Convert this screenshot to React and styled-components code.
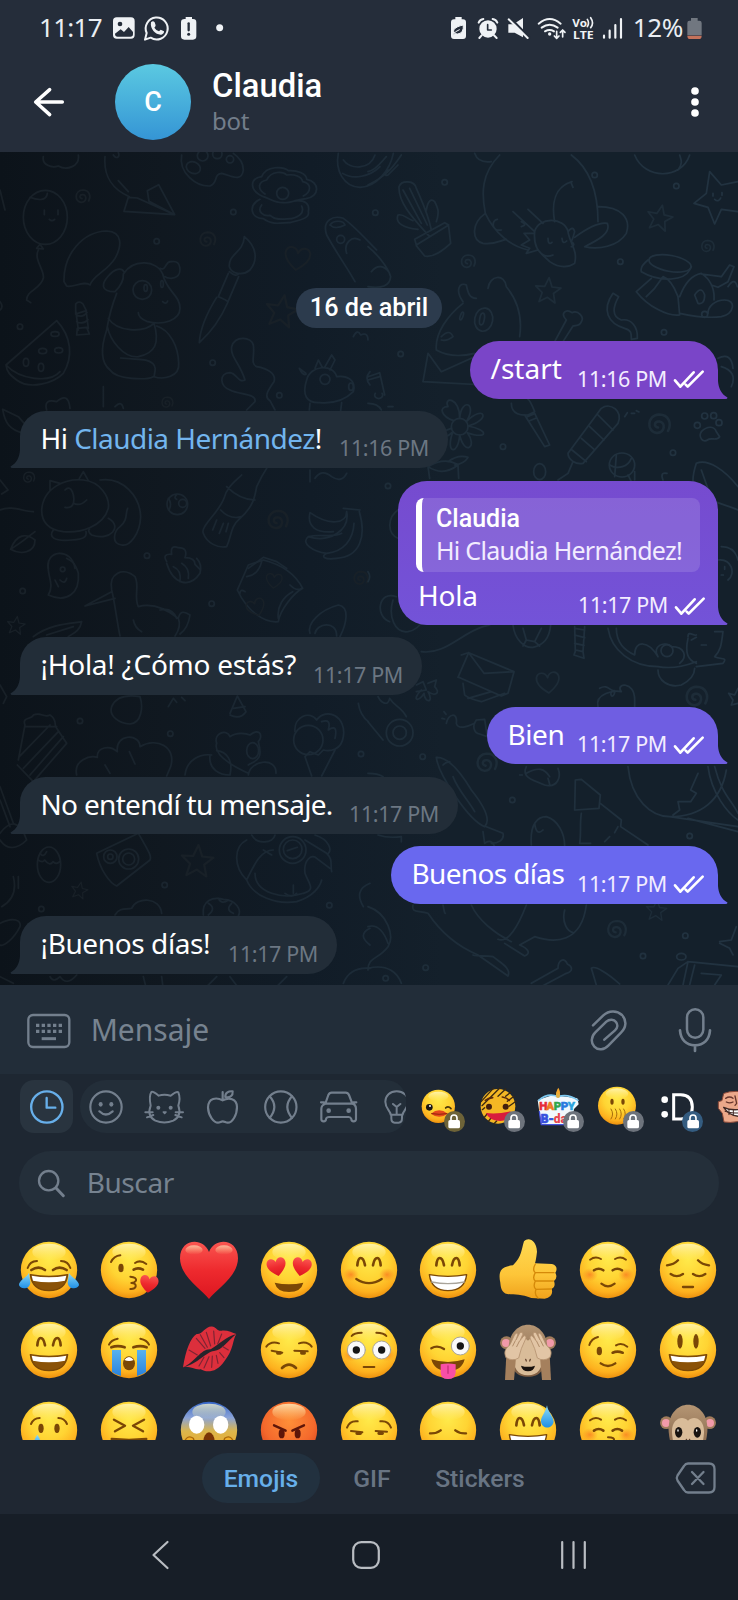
import React from "react";
import styled, { createGlobalStyle } from "styled-components";

const GlobalStyle = createGlobalStyle`
  * { box-sizing: border-box; }
  body { margin: 0; background: #1e2731; }
`;

const sans = `"Noto Sans", "Open Sans", sans-serif`;
const roboto = `Roboto, "Liberation Sans", sans-serif`;

/* ---------- shared pieces ---------- */

const Svg = styled.svg`
  display: block;
  flex: none;
  overflow: visible;
  margin-left: ${(p) => p.$ml || 0}px;
  margin-top: ${(p) => p.$mt || 0}px;
  fill: none;
  stroke-linecap: round;
  stroke-linejoin: round;
`;

/* Icons are drawn on a grid of three units per pixel. */
function Glyph({ box, ml, mt, children }) {
  const [, , w, h] = box;
  return (
    <Svg viewBox={box.join(" ")} width={w / 3} height={h / 3} $ml={ml} $mt={mt}>
      {children}
    </Svg>
  );
}

const Screen = styled.div`
  width: 738px;
  height: 1600px;
  overflow: hidden;
  display: flex;
  flex-direction: column;
  background: #1e2732;
  font-family: ${sans};
  color: #fff;
`;

/* ---------- top ---------- */

const Header = styled.header`
  height: 152px;
  flex: none;
  background: #252d3a;
`;

const StatusBar = styled.div`
  height: 56px;
  display: flex;
  align-items: center;
  padding: 0 36px 0 39px;
`;

const StatusText = styled.span`
  width: ${(p) => p.$w}px;
  margin-left: ${(p) => p.$ml || 0}px;
  font-size: 26px;
  line-height: 55px;
  height: 56px;
  letter-spacing: ${(p) => p.$ls || 0}px;
  color: #e9edf2;
  white-space: nowrap;
`;

const Spacer = styled.div`
  flex: 1;
`;

const TitleBar = styled.div`
  height: 96px;
  display: flex;
  align-items: center;
  padding: 0 39px 4px 34px;
`;

const Avatar = styled.div`
  width: 76px;
  height: 76px;
  margin-left: 51px;
  border-radius: 50%;
  background: linear-gradient(#5bc9e1, #3595d5);
  font: 500 27px/76px ${roboto};
  text-align: center;
`;

const Who = styled.div`
  margin-left: 21px;
  flex: 1;
`;

const Name = styled.div`
  font: 500 32.8px/38px ${roboto};
  margin-top: -1px;
`;

const Kind = styled.div`
  font-size: 24px;
  line-height: 32px;
  letter-spacing: -0.3px;
  color: #737e8b;
`;

/* ---------- chat ---------- */

const Chat = styled.main`
  position: relative;
  height: 833px;
  flex: none;
  overflow: hidden;
  background: linear-gradient(90deg, #0c131a 0, #101820 22%, #111c27 42%, #14202b 60%, #14202b 100%);
`;

const Wallpaper = styled.svg`
  position: absolute;
  inset: 0;
  fill: none;
  stroke: url(#ink);
  stroke-width: 5;
  stroke-linecap: round;
  stroke-linejoin: round;
`;

const Thread = styled.div`
  position: relative;
  display: flex;
  flex-direction: column;
  gap: 12.2px;
  padding: 136px 20px 0;
`;

const DatePill = styled.div`
  align-self: center;
  width: 146px;
  height: 40px;
  margin-bottom: 1px;
  border-radius: 20px;
  background: #2c3b4d;
  font: 500 25.2px/40px ${roboto};
  text-align: center;
`;

const Bubble = styled.div`
  position: relative;
  align-self: ${(p) => (p.$out ? "flex-end" : "flex-start")};
  width: ${(p) => p.$w}px;
  min-height: 57.5px;
  background: ${(p) => p.$bg || "#222d38"};
  border-radius: ${(p) => (p.$out ? "29px 29px 0 29px" : "26px 29px 29px 0")};
  padding: ${(p) => (p.$reply ? "17px 18px 0" : "0 20px 0 20.5px")};
`;

const Line = styled.div`
  display: flex;
  justify-content: space-between;
  height: 57.5px;
  ${(p) => p.$reply && "margin: -4px 1px 0 2px;"}
`;

const Words = styled.span`
  font-size: 28px;
  line-height: 55px;
  white-space: pre;
  letter-spacing: ${(p) => p.$ls || 0}px;
`;

const Mention = styled.span`
  color: #72b5ee;
`;

const Stamp = styled.span`
  display: flex;
  gap: 8px;
  margin-top: 9.5px;
  height: 40px;
  font-size: 21.5px;
  line-height: 55px;
  white-space: pre;
  color: ${(p) => (p.$out ? "#f3edff" : "#6c7783")};
  margin-right: ${(p) => (p.$out ? -6 : 0)}px;
`;

const StampText = styled.span`
  width: 89px;
  letter-spacing: -0.4px;
`;

const Tail = styled.svg`
  position: absolute;
  bottom: 0;
  ${(p) => (p.$out ? "right: -10px;" : "left: -10px; transform: scaleX(-1);")}
`;

const Quote = styled.div`
  height: 74px;
  border-left: 6px solid #fff;
  border-radius: 8px;
  background: rgba(255, 255, 255, 0.13);
  padding: 5px 0 0 14px;
  white-space: nowrap;
`;

const QuoteName = styled.div`
  font: 500 25px/31px ${roboto};
`;

const QuoteText = styled.div`
  font-size: 25px;
  line-height: 32px;
  letter-spacing: -0.72px;
  color: #f2ecff;
`;

function Checks() {
  return (
    <Glyph box={[922, 660, 90, 54]} mt={19.5}>
      <path d="M925 691 L941 710 L981 667 M957 704 L963 710 L1008 665" stroke="#fff" strokeWidth="8" />
    </Glyph>
  );
}

function Message({ w, out, bg, tail = "#222d38", quote, time, ls, children }) {
  return (
    <Bubble $w={w} $out={out} $bg={bg} $reply={!!quote}>
      {quote}
      <Line $reply={!!quote}>
        <Words $ls={ls}>{children}</Words>
        <Stamp $out={out}>
          <StampText>{time}</StampText>
          {out && <Checks />}
        </Stamp>
      </Line>
      <Tail $out={out} width="11" height="18" viewBox="0 0 11 18">
        <path d="M0 0 H1 C1.500 7 4 13 10.500 16.500 Q10.500 18 8.500 18 H0 Z" fill={tail} />
      </Tail>
    </Bubble>
  );
}

/* ---------- wallpaper drawings ---------- */

const Swirl = ({ x, y, s = 1 }) => (
  <path transform={`translate(${x} ${y}) scale(${s})`} d="M0 3 C-9 2 -8 -10 3 -9 C16 -7 14 13 -2 14 C-24 12 -22 -22 2 -23 C22 -23 28 -5 20 10" />
);
const Star = ({ x, y, s = 1, r = 0 }) => (
  <path transform={`translate(${x} ${y}) rotate(${r}) scale(${s})`} d="M0 -40 L11 -13 L38 -12 L17 6 L24 34 L0 19 L-24 34 L-17 6 L-38 -12 L-11 -13 Z" />
);
const Heart = ({ x, y, s = 1, r = 0 }) => (
  <path transform={`translate(${x} ${y}) rotate(${r}) scale(${s})`} d="M0 32 C-20 18 -38 0 -33 -18 C-27 -34 -6 -32 0 -14 C6 -32 27 -34 33 -18 C38 0 20 18 0 32 Z" />
);
const Dots = ({ at }) => at.map(([x, y]) => <circle key={`${x}-${y}`} cx={x} cy={y} r="8" />);

function Doodles() {
  return (
    <Wallpaper width="738" height="833" viewBox="0 0 738 833">
      <defs>
        <linearGradient id="ink" gradientUnits="userSpaceOnUse" x1="0" y1="0" x2="1110" y2="0">
          <stop offset="0" stopColor="#182027" />
          <stop offset="1" stopColor="#1c2b38" />
        </linearGradient>
        <linearGradient id="inkRight" gradientUnits="userSpaceOnUse" x1="0" y1="0" x2="1110" y2="0">
          <stop offset="0" stopColor="#1d2c38" />
          <stop offset="1" stopColor="#223341" />
        </linearGradient>
      </defs>
      <g transform="translate(0 -2) scale(.33333)">
        <path d="M130 20 C125 45 155 55 175 48 C200 62 240 50 235 15 M315 20 C310 80 340 120 388 140 M340 15 C350 30 360 20 355 8" />
        <path d="M385 142 L372 184 L524 194 L476 104 L442 122 L447 154 L524 194 L412 144 L385 142 M355 92 L385 125" />
        <ellipse cx="136" cy="202" rx="66" ry="81" />
        <path d="M90 142 C110 150 140 155 142 130 M133 180 v14 M174 180 v14 M148 208 q8 8 16 0 M120 283 l-10 12 l20 2 Z M115 300 C100 330 135 360 130 385 C120 420 80 420 80 450 L92 458" />
        <Swirl x={246} y={143} /><Swirl x={620} y={272} s={1.1} /><Swirl x={500} y={760} s={.8} />
        <path d="M545 15 C535 70 590 110 630 108 C655 100 640 72 665 70 C690 75 725 100 730 60 C730 35 715 20 700 10" />
        <ellipse cx="580" cy="53" rx="22" ry="17" transform="rotate(25 580 53)" /><circle cx="608" cy="17" r="16" /><circle cx="652" cy="12" r="14" /><circle cx="690" cy="28" r="11" />
        <path d="M790 140 C745 120 750 85 785 80 C800 45 850 50 865 62 C890 60 920 70 920 88 C960 95 960 140 918 146 C880 150 875 160 850 158 C820 158 810 145 790 140 Z M795 132 C770 115 775 95 800 90 C815 60 850 65 860 75 C885 72 905 80 908 95 C935 100 935 125 910 138" />
        <path d="M780 148 C745 165 750 205 790 206 C820 230 855 215 870 218 C900 210 930 205 925 185 C930 160 915 150 885 152 M785 165 C770 185 790 200 810 196 C830 215 860 205 875 206 C895 200 915 190 905 168" />
        <circle cx="848" cy="130" r="18" />
        <path d="M1015 10 C1005 60 1030 110 1080 112 C1130 110 1170 60 1180 10 M1030 30 C1050 60 1110 60 1125 15 M1028 70 C1060 90 1110 80 1140 50" />
        <path d="M192 395 C190 310 250 245 320 243 C370 245 365 290 345 325 C320 365 280 375 270 405 C255 390 215 415 200 408 Z" />
        <path d="M345 425 C300 425 305 400 325 378 C345 355 365 352 372 366 M370 372 C400 325 470 330 488 372 C500 425 540 435 540 475 C540 510 490 528 440 514 C420 505 415 495 415 488 M480 355 C500 365 495 330 515 335 C545 330 545 370 530 380 C520 388 500 385 495 380 M370 372 C372 395 355 415 345 425 M488 455 q10 10 15 -2" />
        <circle cx="427" cy="420" r="28" /><ellipse cx="437" cy="414" rx="5" ry="10" /><ellipse cx="486" cy="402" rx="4" ry="10" />
        <path d="M350 430 C330 480 325 510 320 540 C300 600 305 640 330 660 C350 690 440 690 460 680 M325 505 C350 545 430 550 462 520 C480 580 465 610 415 620 C370 625 330 570 322 530 M362 624 C420 630 440 625 458 640 C470 650 465 665 462 680 C490 690 540 680 536 640 C535 590 510 540 470 528" />
        <path d="M733 260 C770 290 775 330 750 360 C725 380 695 370 688 350 C685 310 730 310 733 260 M688 365 C700 375 710 380 718 370 M685 370 L655 440 C665 445 675 448 684 455 L716 380 M650 442 C620 490 600 540 598 578 C640 540 665 500 684 456" />
        <Heart x={892} y={325} s={1.1} r={8} /><Star x={845} y={485} s={1.25} r={10} />
        <path d="M980 255 C965 210 1000 195 1030 205 C1060 225 1100 270 1130 300 M980 255 C1010 310 1040 350 1065 395 M990 225 C1000 210 1030 210 1035 225 C1015 235 1000 235 990 225 M1040 310 C1030 280 1055 255 1080 270" /><circle cx="1022" cy="268" r="12" />
        <path d="M18 645 L170 512 C215 560 220 620 190 670 C160 700 90 720 50 690 C30 675 20 665 18 645 C60 690 150 700 180 665" />
        <ellipse cx="78" cy="637" rx="8" ry="12" /><ellipse cx="123" cy="652" rx="8" ry="12" /><ellipse cx="128" cy="603" rx="12" ry="8" /><ellipse cx="176" cy="601" rx="12" ry="8" /><ellipse cx="165" cy="552" rx="12" ry="7" />
        <path d="M227 462 q10 -12 22 0 l10 20 l-32 10 Z M229 495 q20 10 32 -8 M230 515 q20 10 34 -6 M232 535 l-2 20 l38 -3 l-8 -20 Z M227 480 L235 540 M258 480 L265 535" />
        <path d="M735 690 C720 640 690 620 695 590 C705 555 755 560 760 585 C765 620 750 640 770 650 C800 655 830 670 822 695 C805 720 790 740 810 752 L825 780 M735 690 C715 700 710 670 690 668 C655 670 660 710 690 720 C720 735 770 730 765 755 L740 780" />
        <path d="M920 690 C905 735 920 760 960 758 C1010 762 1040 745 1060 725 C1070 690 1040 675 1010 680 C1000 640 930 645 920 690 M918 670 L898 655 q10 22 20 18 M945 655 l10 -25 l12 22 M975 650 l20 -35 l10 15 l-15 30 M930 760 L928 780 M1025 758 L1022 782" /><circle cx="975" cy="688" r="15" /><ellipse cx="1053" cy="710" rx="7" ry="11" />
        <path d="M1060 560 q12 -25 22 -5 q22 -10 22 15 M1110 665 q-18 20 0 40" />
        <path d="M8 778 L55 800 L90 840 L70 850 C30 840 15 820 8 778 M140 780 q-10 -35 30 -25 q35 -30 40 20 M310 710 v60 M345 770 q20 -20 25 5 M0 120 l15 60 M0 455 q12 15 0 25" />
        <path d="M125 1080 C130 1010 200 985 250 990 C300 995 330 1040 325 1075 C310 1130 240 1150 190 1145 C150 1140 125 1120 125 1080 M150 1022 L150 992 L180 1000 M238 985 L250 965 L265 992 M300 990 C370 980 420 1040 422 1100 C420 1150 390 1190 365 1185 C330 1180 345 1140 360 1130 C385 1110 375 1090 383 1075 M325 1105 C370 1130 330 1175 275 1155 C265 1148 265 1140 268 1138 M160 1140 C145 1160 160 1175 215 1170 C260 1168 260 1155 258 1145 M195 1020 C215 1000 225 1040 220 1060 q20 10 40 -10 M220 1060 q-5 16 -25 12" />
        <Swirl x={85} y={985} s={.8} /><Swirl x={830} y={1115} s={1.4} />
        <path d="M0 990 L24 1020 L5 1032 M0 1080 C35 1065 70 1085 100 1085 M32 1198 C50 1150 80 1150 105 1170 C105 1210 60 1215 32 1198 C60 1180 80 1165 105 1145" />
        <circle cx="532" cy="1063" r="31" /><circle cx="548" cy="1060" r="12" /><path d="M505 1045 q12 15 2 35 M530 1034 q-10 10 0 14" />
        <path d="M725 975 C710 990 680 1010 672 1045 C655 1090 600 1130 610 1150 C620 1180 655 1195 680 1190 C695 1160 690 1130 720 1105 C760 1070 765 1040 770 1010 L785 980 L800 955 M680 1010 Q720 1050 765 1050 M662 1080 Q690 1110 725 1100 M650 1110 L638 1140 M670 1120 L658 1150 M685 1120 L678 1145" />
        <path d="M930 960 L930 995 M945 985 q20 -30 50 -5 q30 20 45 -10 M1030 1075 L1080 1080 M1040 1085 C1040 1120 990 1130 930 1088 C920 1130 950 1150 1000 1145 M1040 1085 C1050 1140 990 1180 925 1160 C900 1180 940 1205 980 1210 C960 1220 975 1230 1010 1225 C1080 1220 1100 1160 1078 1085 M925 1160 C960 1150 1000 1165 1025 1150 M980 1210 C1030 1205 1060 1170 1062 1120" />
        <path d="M145 1255 C135 1200 215 1190 225 1255 M500 1235 q-15 -25 15 -22 q-5 -30 20 -20 q30 0 20 30 q30 0 30 20 L600 1258 M745 1255 L790 1222 L830 1235 L860 1255" />
        <Dots at={[[700, 186], [470, 274], [60, 530], [638, 638], [838, 736], [441, 1217]]} />
      </g>
      <g transform="translate(368 -2) scale(.33333)" stroke="url(#inkRight)">
        <path d="M0 105 C50 80 70 60 100 15 M0 65 C25 60 40 35 55 20 M60 60 q-15 20 0 15 L90 45" />
        <path d="M185 260 C140 210 90 160 93 110 C100 90 140 90 145 115 C160 150 180 190 190 240 M105 120 L160 220 M125 115 L178 225 M140 268 L230 218 L242 225 L145 285 Z M145 287 L170 318 Q200 325 248 280 L242 230 M150 238 C110 235 80 220 90 195 C105 190 115 205 135 212 M175 180 C180 150 190 145 200 155 C210 175 215 185 205 215" />
        <path d="M395 15 C340 70 340 130 352 190 C380 250 430 290 480 300 M610 15 C670 60 690 130 690 215 M352 190 C310 220 310 270 345 280 C380 285 400 270 415 268 M400 240 C370 245 370 210 388 208 M690 170 C760 170 790 205 775 250 C750 290 690 300 650 290 C690 270 730 250 718 220 C690 215 650 240 620 262 M612 95 C560 110 550 160 560 215 M610 100 L615 112 M320 10 q10 30 50 25" />
        <path d="M500 245 C510 200 590 200 600 245 C605 280 630 300 620 340 C590 360 560 345 545 335 C520 310 495 300 500 245 M435 185 L500 245 M480 178 L525 220 M460 215 q20 10 0 15 M500 250 L468 250 L485 270 L460 285 L485 295 L475 310 L510 300 M600 245 q15 -20 20 0 q-5 20 -10 30 q15 10 0 15 M540 265 q0 22 12 12 M582 265 q2 20 14 8 M515 305 q15 20 40 10" />
        <path d="M800 15 C830 90 940 90 965 15 M930 60 C945 40 940 30 935 15" />
        <Star x={875} y={205} r={12} /><Star x={540} y={423} r={5} />
        <path d="M1025 65 L1060 105 L1110 95 M1025 65 L1015 130 L978 160 L1020 172 L1040 222 L1060 178 L1110 185 M1035 130 v8 M1062 128 v8 M1040 148 q12 10 18 -4" />
        <Swirl x={298} y={338} /><Swirl x={1017} y={292} s={.9} />
        <ellipse cx="906" cy="340" rx="64" ry="24" transform="rotate(10 906 340)" />
        <path d="M820 365 Q815 350 840 330 M820 365 C880 400 950 390 965 360 L970 350 M850 385 L805 425 C840 470 900 500 935 495 L930 440 C915 400 900 385 885 380 L860 415 L835 440 M935 440 C950 400 970 375 1000 370 C1030 390 1040 420 1038 450 M935 490 C980 500 1020 505 1060 500 C1100 490 1105 450 1070 450 C1040 450 1020 470 1020 490 M1000 372 L1060 380 L1085 345 L1098 350 L1080 395 L1050 412 L1030 405 M1080 410 q20 -30 28 0 M980 435 q20 -30 30 0 q0 30 -20 25 Z" /><circle cx="1010" cy="493" r="9" />
        <path d="M0 290 C25 310 60 350 68 380 C65 410 40 415 0 410 M10 365 C30 340 50 350 62 365" />
        <path d="M285 455 C260 420 275 395 295 405 C300 430 305 445 325 445 M360 415 C365 375 410 370 415 410 C440 440 465 490 455 560 M285 460 C240 495 200 550 205 600 C240 620 280 620 320 610 M220 560 q25 -25 35 0 q-20 15 -35 10" /><ellipse cx="347" cy="509" rx="27" ry="35" transform="rotate(10 347 509)" /><ellipse cx="342" cy="507" rx="7" ry="18" transform="rotate(10 342 507)" /><ellipse cx="281" cy="498" rx="4" ry="12" transform="rotate(20 281 498)" />
        <path d="M180 610 L165 695 L350 705 M180 610 L220 665 L320 620 M560 575 L595 510 C575 490 595 475 612 488 C630 480 650 500 640 515 C635 530 622 525 615 528 L585 575" />
        <path d="M735 430 C700 480 720 520 770 535 C790 540 790 550 790 568 L808 565 C810 530 790 505 760 510 C730 500 735 470 752 440 Z" />
        <path d="M0 680 L35 668 L50 735 M0 690 L35 680 M22 730 a12 10 0 1 0 20 0 M0 760 q30 0 40 20 M60 770 L75 770" />
        <circle cx="275" cy="830" r="25" />
        <path d="M257 812 C220 800 210 770 240 770 C225 740 275 740 275 805 C280 740 330 760 295 815 C350 760 370 810 300 828 C365 840 360 870 298 848 C330 890 290 920 275 855 C270 920 230 910 255 845 C220 880 200 850 250 835" />
        <path d="M430 760 C430 800 470 795 480 795 L500 785 C490 760 485 750 480 748 M470 795 L530 890 L545 885 L500 790 M478 800 l20 -8 M485 812 l20 -8" />
        <path d="M600 910 L700 775 C730 755 765 785 750 820 L645 940 C625 945 600 930 600 910 M612 900 L655 935 M640 865 L680 900 M665 830 L708 870 M690 795 L735 840 M615 935 L600 970 L570 990 M770 800 l8 -12 M790 790 h10 M805 782 l8 4" />
        <Swirl x={870} y={828} s={1.5} />
        <path d="M1000 845 C1020 825 1040 830 1045 845 L1055 860 C1045 875 1030 860 1018 870 C1005 880 990 860 1000 845" /><circle cx="988" cy="826" r="9" /><circle cx="1010" cy="798" r="9" /><circle cx="1037" cy="797" r="9" /><circle cx="1053" cy="818" r="9" />
        <ellipse cx="762" cy="945" rx="38" ry="36" /><path d="M725 945 C750 960 780 950 790 925 M745 915 L740 980 M780 975 L790 995 M800 965 L800 990 M885 990 q-10 -25 12 -20" />
        <ellipse cx="515" cy="965" rx="18" ry="24" /><path d="M180 950 L185 985 M270 945 L272 985 M180 950 Q225 980 270 945 Q230 920 180 950 M240 935 C260 920 280 915 300 922 Q290 940 260 945" />
        <path d="M985 940 C965 1000 970 1040 1040 1055 C1070 1065 1100 1075 1110 1080 M985 940 C1020 925 1070 960 1110 1010 M1000 960 L1030 1045 M1050 625 q40 -20 45 30 M1060 650 q50 15 30 60" />
        <path d="M90 1080 C60 1100 55 1150 90 1165 M1060 1190 q40 0 50 40" />
        <Dots at={[[230, 97], [22, 188], [925, 108], [757, 335], [98, 612], [405, 890], [60, 1008], [915, 908], [680, 75], [888, 547]]} />
      </g>
      <g transform="translate(0 408) scale(.33333)">
        <path d="M145 10 C140 50 165 70 145 105 C200 130 240 100 235 40 C225 5 210 0 200 -5 M165 60 l10 20 M180 60 q15 15 20 -5" /><circle cx="188" cy="28" r="7" />
        <path d="M360 228 C350 180 345 130 335 90 C325 40 370 20 405 50 C420 80 400 110 415 140 C450 130 490 140 535 175 C545 200 530 220 525 228 M335 95 L255 138 L345 115 M400 180 Q405 205 425 215 M480 150 C500 145 520 150 530 175 M535 175 C540 150 555 155 570 165 C565 200 550 215 540 222" />
        <path d="M100 230 C150 190 220 190 245 185 C240 215 215 222 205 230 M140 225 L220 200" />
        <Star x={48} y={197} s={.7} r={8} /><Swirl x={1080} y={58} />
        <path d="M500 10 C520 75 570 85 600 40 C605 20 600 5 590 -5 M520 20 q25 10 20 45 M545 10 q25 15 20 45" />
        <path d="M712 90 L745 15 L790 0 C830 10 880 30 908 85 C880 100 840 150 835 185 C790 190 740 150 712 90 M740 50 q35 -5 45 -45 M720 100 q0 -15 15 -5 M870 75 q20 20 35 10 M835 175 C830 140 850 110 878 95" /><Heart x={822} y={62} s={.7} r={5} /><Heart x={768} y={142} s={.8} r={-20} />
        <path d="M930 220 C920 190 960 150 1015 135 C1050 140 1040 190 1020 230 M945 220 C950 190 1010 180 1010 228" />
        <path d="M335 440 C350 405 390 405 420 410 C430 440 425 490 390 492 C360 490 325 470 335 440 M0 375 L20 410 L10 430" /><path d="M690 460 L712 408 L738 455 Q720 480 690 465 M700 445 L735 440 M505 440 l15 -25 l10 12 M545 412 l10 10" />
        <path d="M55 600 L75 495 C65 470 95 480 100 465 C125 455 130 475 150 465 C175 480 160 500 170 505 L200 550 L100 665 L52 615 M75 500 Q120 500 170 500 M58 590 L150 495 M70 625 L175 515 M90 645 L190 530" />
        <path d="M230 645 C220 600 270 585 292 592 C290 560 330 555 352 575 C345 520 420 520 420 560 C470 530 530 560 512 620 L500 648 M388 575 L405 612 M315 615 L330 640" />
        <path d="M555 645 C560 600 600 580 635 585 M650 550 C640 520 680 505 690 530 C710 515 740 520 750 525 C780 500 790 530 775 545 M650 550 C640 580 680 610 745 640 M775 545 C790 600 770 600 745 615 M630 585 C625 630 660 645 690 645 C700 600 680 575 650 572 M745 645 C750 600 830 590 828 640" /><ellipse cx="758" cy="572" rx="18" ry="24" />
        <circle cx="925" cy="540" r="44" /><path d="M885 515 C880 470 930 450 950 480 C980 440 1040 470 1030 530 C1025 570 990 575 970 570 L955 585 L930 575 L915 590 M915 590 L935 648 M1005 570 L965 648 M965 485 q30 -10 20 25 q30 -20 20 25 M1075 430 q5 35 30 55" />
        <path d="M0 680 L40 790 M0 720 L30 800 M0 820 C30 780 60 780 80 840 C50 870 20 870 0 840" />
        <path d="M290 880 L415 820 C450 880 455 890 450 900 L350 978 C330 970 300 930 290 880" /><circle cx="331" cy="890" r="20" /><circle cx="331" cy="890" r="8" /><circle cx="386" cy="897" r="30" /><circle cx="386" cy="897" r="18" />
        <ellipse cx="147" cy="914" rx="35" ry="53" /><path d="M114 900 q15 10 20 0 q15 20 25 5 q10 10 20 0 M120 880 q10 15 20 -5" />
        <Star x={592} y={905} s={1.25} r={4} /><Star x={238} y={992} s={.65} r={12} />
        <path d="M755 825 C770 855 820 850 825 825 M740 840 C700 860 700 920 740 960 C760 920 780 870 820 870 M740 960 C760 1010 830 1035 890 1025 C940 1010 960 980 965 960 M765 940 C765 1000 850 1020 910 1000 C950 990 925 970 915 940 C910 900 935 880 950 895 L990 925 M915 840 L980 880 C1000 900 990 910 995 935 M945 825 C990 840 995 870 985 880 M790 870 l25 15" /><circle cx="878" cy="870" r="40" /><circle cx="878" cy="868" r="28" /><path d="M862 872 l30 -10 M880 975 v25 M855 1000 q20 15 35 0" />
        <path d="M345 1065 C360 1040 380 1050 395 1045 C410 1010 480 1010 485 1060 M610 1065 C605 1020 640 1010 670 1018 C710 1020 725 1050 715 1068 M625 1065 q25 -20 0 -35 M700 1060 q-25 -10 -5 -30 M655 1015 q10 20 30 5" />
        <path d="M40 950 C50 990 40 1020 5 1040 M55 950 L55 985 M0 1090 C40 1070 65 1080 60 1100 C40 1140 10 1160 0 1155 M150 1250 q10 20 30 0 q20 30 50 -5 M0 1250 l40 20 M430 1250 L440 1290 M485 1250 L490 1290 M610 1290 L650 1250 M690 1250 L720 1290 M860 1250 L820 1290 M1030 1270 q20 -50 80 -45 M1110 970 q-50 20 -20 70 M1110 1105 q-40 20 0 50" />
        <Dots at={[[635, 131], [68, 93], [240, 483], [511, 521], [1083, 582], [494, 975], [124, 1047], [988, 1036]]} />
      </g>
      <g transform="translate(368 408) scale(.33333)" stroke="url(#inkRight)">
        <path d="M85 110 C30 90 20 170 65 185 M75 120 C60 170 80 220 120 215 C150 210 160 190 165 180 M160 275 C230 285 280 220 345 200 C400 190 430 140 430 110" />
        <path d="M435 195 C440 240 470 265 495 262 C530 255 545 230 548 195 M465 205 L475 240 L500 245 L520 205 M475 240 L465 258 M500 245 L515 258 M620 205 l30 5 M620 225 l30 8 M620 250 l28 6 M618 285 l30 10 l-3 -20 l-22 -5 Z M620 200 L622 275 M650 200 L645 275" />
        <path d="M720 205 C730 270 790 320 870 320 C930 330 970 310 985 305 M745 205 C745 250 770 270 800 285 C800 240 840 240 870 290 M870 330 C870 360 900 385 940 375 C970 360 980 340 980 325 M960 230 C960 210 980 230 985 225 M1040 215 L1065 215 C1060 250 1060 270 1040 290 C1060 300 1080 290 1065 310 L985 320 M960 235 C950 280 960 300 985 310 M970 240 l15 -8 M1000 255 l15 0 M870 290 C850 260 890 240 910 260 C950 260 960 290 935 310" /><circle cx="897" cy="272" r="18" />
        <path d="M270 352 L302 278 L438 335 L420 400 L400 408 L272 352 M302 278 L348 340 L438 335 M285 370 L290 405 C300 415 320 420 340 425 L410 400 M300 415 L370 395 M280 285 l18 -6" />
        <Heart x={540} y={367} s={1} r={-5} />
        <path d="M145 375 l20 -10 l10 25 l-30 5 M160 390 C130 420 150 430 168 400 C170 430 200 430 180 395 C200 410 220 400 200 380 L205 360 L180 370 M0 485 L45 540 M30 410 C40 430 60 440 65 415 C80 440 100 440 115 470" /><circle cx="95" cy="518" r="40" /><circle cx="95" cy="518" r="20" />
        <path d="M690 440 C680 400 740 390 760 395 C740 370 800 360 800 420 L800 440 M695 385 C720 370 725 395 740 392 M735 392 C720 400 735 420 740 398" />
        <Swirl x={982} y={415} s={1.5} /><Swirl x={353} y={613} s={1.4} /><Swirl x={743} y={1113} s={1.3} />
        <path d="M1110 385 L1100 405 L1082 400 L1095 420 L1090 435 L1110 430 M235 490 C240 460 270 455 265 490 C270 510 300 500 320 490 M325 480 C310 500 320 520 335 522 L358 530 L350 478 Z M222 475 l8 2 M228 455 l6 8" />
        <path d="M205 592 C210 640 300 780 350 800 C370 780 350 740 310 690 C280 640 240 590 205 592 M225 615 C240 600 240 610 245 605 M255 650 C270 690 300 720 320 755 M345 815 L350 850 M355 800 L405 820 C410 840 390 850 370 850 M350 850 q20 -15 30 10" />
        <path d="M475 620 C460 650 490 660 530 675 C570 685 580 650 570 625 M475 640 C510 620 530 625 545 650 M540 655 l5 18 M455 645 h8 M620 750 L622 660 L640 658 L697 705 L693 745 L622 750 M697 730 L760 780 L758 800 L840 855 M640 760 C635 790 640 820 635 850 L668 850 M750 800 l-10 18 M725 830 l-15 15" />
        <path d="M780 620 C790 720 850 770 905 770 C1000 770 1060 720 1075 630 M990 640 L968 690 L985 700 L968 725 L930 725 L935 750 L915 765 M1020 620 C1030 700 1080 760 1110 780 M1040 620 C1060 700 1090 720 1110 760 M905 770 L1110 800 M960 775 L1110 815" />
        <path d="M490 855 C485 790 510 770 535 770 C570 780 590 820 590 858 M500 790 q5 40 25 20 M0 640 q30 0 45 10 M30 825 q30 10 70 5 L100 845" />
        <path d="M135 1035 C130 1060 150 1050 180 1060 C220 1120 270 1160 330 1185 L420 1248 C430 1225 400 1210 375 1190 C350 1185 320 1190 315 1185 M225 1035 C230 1060 230 1060 232 1060 M310 1035 C330 1080 380 1120 430 1145 M390 1138 C420 1150 450 1100 475 1035 M410 1150 L470 1188 C490 1180 480 1165 455 1155 L500 1130 C560 1150 640 1150 655 1035 M590 1050 C580 1090 600 1115 615 1118" />
        <Star x={865} y={1052} s={.8} r={5} />
        <path d="M0 1040 C60 1060 80 1130 60 1160 C30 1200 0 1190 0 1230 M0 1100 C30 1090 50 1120 60 1150 M0 1225 C60 1210 90 1240 100 1270 M490 1270 L570 1225 C570 1200 590 1190 598 1212 C615 1220 615 1235 595 1240 L510 1285 M670 1225 C680 1215 720 1240 755 1272 M670 1225 L685 1275 M900 1275 L930 1225 L960 1205 L1110 1220 M960 1205 L945 1275 M980 1215 L965 1275 M1000 1240 L1060 1245 L1040 1275 M1055 1145 L1090 1140 L1105 1100 M1055 1150 L1085 1165 L1095 1185" /><ellipse cx="940" cy="1190" rx="14" ry="10" />
        <Dots at={[[164, 590], [433, 720], [965, 828], [952, 1127], [825, 1188], [173, 1223], [53, 1255]]} />
        <path d="M1050 0 C1090 -5 1105 40 1080 60 M1070 20 v8 M1060 45 h6 M0 35 q10 15 0 30" />
      </g>
    </Wallpaper>
  );
}

/* ---------- composer ---------- */

const Composer = styled.div`
  height: 89px;
  flex: none;
  display: flex;
  align-items: center;
  background: #222d39;
  padding: 0 27px 0 27px;
`;

const Placeholder = styled.span`
  flex: 1;
  margin-left: ${(p) => p.$ml}px;
  margin-top: ${(p) => p.$mt || 0}px;
  font-size: ${(p) => p.$size}px;
  line-height: 60px;
  letter-spacing: ${(p) => p.$ls || 0}px;
  color: #778390;
`;

/* ---------- emoji panel ---------- */

const Categories = styled.div`
  height: 59px;
  flex: none;
  display: flex;
  gap: 7px;
  padding: 6px 0 0 20px;
  overflow: hidden;
`;

const RecentTab = styled.div`
  width: 53px;
  height: 53px;
  flex: none;
  display: grid;
  place-items: center;
  border-radius: 14px;
  background: #29343f;
`;

const CategoryPill = styled.div`
  width: 326px;
  height: 53px;
  flex: none;
  display: flex;
  overflow: hidden;
  border-radius: 26px 20px 20px 26px;
  background: #232e39;
`;

const CategoryIcon = styled.div`
  width: 58.1px;
  height: 53px;
  flex: none;
  display: grid;
  place-items: center;
  &:first-child {
    margin-left: -3px;
  }
`;

const Packs = styled.div`
  display: flex;
  margin-left: -4px;
`;

const Pack = styled.div`
  position: relative;
  width: 59.6px;
  height: 53px;
  flex: none;
  display: grid;
  place-items: center;
`;

const Lock = styled.div`
  position: absolute;
  left: 35px;
  top: 31px;
  width: 21px;
  height: 21px;
  display: grid;
  place-items: center;
  border-radius: 50%;
  background: ${(p) => p.$bg};
`;

const Search = styled.div`
  width: 700px;
  height: 64px;
  flex: none;
  display: flex;
  align-items: center;
  margin: 18px 0 15px 19px;
  padding-left: 19px;
  border-radius: 32px;
  background: #242f3a;
`;

const EmojiGrid = styled.div`
  height: 210px;
  flex: none;
  display: grid;
  grid-template-columns: repeat(9, 79.9px);
  grid-auto-rows: 80px;
  padding-left: 9px;
  overflow: hidden;
`;

const EmojiCell = styled.div`
  display: grid;
  place-items: center;
`;

const brown = "#7a4706";
const B = ({ d, w = 6 }) => <path d={d} stroke={brown} strokeWidth={w} />;
const SmallHeart = ({ x, y, s = 1, r = 0 }) => (
  <path transform={`translate(${x} ${y}) rotate(${r}) scale(${s})`} fill="url(#red)" d="M0 28 C-14 18 -29 4 -28 -10 C-27 -28 -6 -30 0 -14 C6 -30 27 -28 28 -10 C29 4 14 18 0 28 Z" />
);
const Blush = () => (
  <>
    <ellipse cx="-54" cy="14" rx="24" ry="20" fill="url(#blush)" />
    <ellipse cx="54" cy="14" rx="24" ry="20" fill="url(#blush)" />
  </>
);
const ArchEyes = () => <B w={8} d="M-35 -14 Q-33 -36 -25 -36 Q-16 -36 -12 -14 M12 -14 Q16 -36 25 -36 Q33 -36 35 -14" />;
const OpenMouth = ({ grin }) => (
  <>
    <path d="M-56 14 Q0 24 56 14 Q50 62 0 62 Q-50 62 -56 14 Z" fill={grin ? "#fff" : "#8a5207"} stroke={brown} strokeWidth="4" />
    {grin ? (
      <path d="M-49 36 Q0 46 49 36" stroke="#a9a49a" strokeWidth="4" />
    ) : (
      <path d="M-52 17 Q0 27 52 17 L48 32 Q0 41 -48 32 Z" fill="#fff" />
    )}
  </>
);
const RoundEye = ({ x, y, r = 27 }) => (
  <>
    <circle cx={x} cy={y} r={r} fill="#fafafa" stroke="#a9a49a" strokeWidth="3" />
    <circle cx={x} cy={y} r="11" fill="#161616" />
  </>
);
const Face = ({ fill = "url(#face)", children }) => (
  <>
    <circle r="84.5" fill={fill} />
    <ellipse cy="-54" rx="50" ry="25" fill="url(#shine)" />
    {children}
  </>
);
const Oval = ({ x, y, rx = 8, ry = 14 }) => <ellipse cx={x} cy={y} rx={rx} ry={ry} fill={brown} />;

const Monkey = ({ covered }) => (
  <>
    {[-1, 1].map((s) => (
      <g key={s} transform={`scale(${s} 1)`}>
        <circle cx="65" cy="-22" r="19" fill="#a07c5c" />
        <circle cx="66" cy="-21" r="12" fill="#f19aa9" />
      </g>
    ))}
    <path d="M-58 5 C-64 -103 64 -103 58 5 C53 60 35 80 0 80 C-35 80 -53 60 -58 5 Z" fill="url(#fur)" />
    <path d="M-48 8 C-50 -35 -16 -46 0 -28 C16 -46 50 -35 48 8 C45 55 30 76 0 76 C-30 76 -45 55 -48 8 Z" fill="#d9bc99" />
    {covered ? (
      <>
        <path d="M-21 47 Q0 54 21 47 Q17 64 0 64 Q-17 64 -21 47 Z" fill="#17110e" />
        <path d="M-7 28 l2 5 M7 28 l-2 5" stroke="#6a4a35" strokeWidth="4" />
        {[-1, 1].map((s) => (
          <g key={s} transform={`scale(${s} 1)`}>
            <path d="M69 90 L65 15 L36 22 L42 90 Z" fill="#a5805d" />
            <path d="M66 22 C76 2 62 -8 54 -16 L40 -46 Q34 -54 30 -48 L36 -30 L24 -52 Q17 -56 15 -48 L24 -28 L12 -43 Q5 -44 6 -36 L20 -4 L28 24 Q48 36 66 22 Z" fill="#e2c5a5" stroke="#b59270" strokeWidth="2.500" />
            <path d="M38 -28 L46 -12 M26 -26 L34 -10" stroke="#b08c69" strokeWidth="3" />
          </g>
        ))}
      </>
    ) : (
      <>
        <ellipse cx="-28" cy="7" rx="11" ry="16" fill="#181310" />
        <ellipse cx="28" cy="7" rx="11" ry="16" fill="#181310" />
        <path d="M-30 0 v3 M26 0 v3" stroke="#fff" strokeWidth="4" />
        <path d="M-5 28 l2 5 M5 28 l-2 5" stroke="#5d4030" strokeWidth="4" />
      </>
    )}
  </>
);

const emojis = [
  ["joy", <Face><B d="M-64 -6 Q-58 -26 -36 -27 M64 -6 Q58 -26 36 -27" /><B w={8} d="M-53 0 Q-31 -14 -12 0 M53 0 Q31 -14 12 0" /><OpenMouth /><path d="M-60 8 C-66 22 -92 32 -90 46 C-84 60 -58 58 -56 38 Z M60 8 C66 22 92 32 90 46 C84 60 58 58 56 38 Z" fill="url(#tear)" /></Face>],
  ["kiss", <Face><B d="M-54 -24 Q-45 -42 -26 -44 M18 -21 Q34 -32 52 -18" /><B w={8} d="M14 -1 Q26 -9 42 -1" /><Oval x={-24} y={-6} ry={13} /><B d="M4 20 Q24 22 21 32 Q18 38 7 39 Q22 40 20 50 Q17 58 4 57" /><SmallHeart x={60} y={41} s={.98} r={8} /></Face>],
  ["heart", <><path d="M0 87 C-20 60 -87 20 -87 -35 C-87 -94 -18 -100 0 -54 C18 -100 87 -94 87 -35 C87 20 20 60 0 87 Z" fill="url(#red)" /><ellipse cx="-45" cy="-60" rx="26" ry="14" fill="url(#shine)" opacity=".8" /><ellipse cx="45" cy="-60" rx="26" ry="14" fill="url(#shine)" opacity=".8" /></>],
  ["hearteyes", <Face><SmallHeart x={-37} y={-10} r={-12} s={1.02} /><SmallHeart x={38} y={-10} r={12} s={1.02} /><path d="M-43 38 Q0 48 43 38 Q36 66 0 66 Q-36 66 -43 38 Z" fill={brown} /></Face>],
  ["blush", <Face><Blush /><ArchEyes /><B w={7} d="M-38 27 Q0 52 38 27" /></Face>],
  ["grin", <Face><ArchEyes /><OpenMouth grin /></Face>],
  ["thumb", <><path d="M-83 38 C-90 5 -82 -10 -45 -14 C-18 -40 -20 -62 -12 -86 C0 -99 25 -92 27 -55 Q24 -30 21 -20 L72 -18 C88 -15 88 0 82 8 Q90 24 78 33 Q84 50 71 56 Q78 80 50 86 L10 84 C-20 72 -40 75 -62 72 C-80 68 -82 50 -83 38 Z" fill="url(#hand)" /><path d="M22 -18 Q12 0 22 8 L78 8 M22 8 Q12 25 22 33 L76 33 M22 33 Q14 50 24 58 L70 57 M24 58 Q18 75 30 84" stroke="#d58909" strokeWidth="4" /></>],
  ["relaxed", <Face><Blush /><B w={5.5} d="M-54 -31 Q-38 -43 -21 -33 M54 -31 Q38 -43 21 -33" /><B w={7.5} d="M-42 1 Q-28 -9 -14 1 M42 1 Q28 -9 14 1" /><B w={6.5} d="M-20 41 Q0 57 20 41" /></Face>],
  ["pensive", <Face><B d="M-63 -14 Q-42 -16 -30 -29 M63 -14 Q42 -16 30 -29 M-52 12 Q-34 25 -15 12 M52 12 Q34 25 15 12 M-15 51 H15" w={7} /></Face>],

  ["smile", <Face><ArchEyes /><OpenMouth /></Face>],
  ["sob", <Face><path d="M-51 0 H-24 V78 Q-40 74 -51 66 Z M24 0 H51 V66 Q40 74 24 78 Z" fill="url(#stream)" /><B d="M-60 -16 Q-54 -30 -34 -34 M60 -16 Q54 -30 34 -34" /><B w={8} d="M-53 -8 Q-34 -15 -13 -8 M53 -8 Q34 -15 13 -8" /><ellipse cy="40" rx="18" ry="21" fill={brown} /><path d="M-14 30 Q0 12 14 30 Q0 36 -14 30" fill="#fff" /></Face>],
  ["lips", <><path d="M-78 52 C-70 0 -55 -38 -37 -48 C-20 -45 -10 -75 12 -70 C22 -68 25 -56 38 -58 C55 -60 70 -52 82 -48 C70 -30 75 0 45 35 C25 65 -5 70 -25 58 C-45 60 -60 45 -78 52 Z" fill="#dc2f3c" /><path d="M-78 52 C-40 36 -25 -4 5 -2 C35 -20 50 -40 82 -48 C55 -27 40 0 15 3 C-10 6 -30 40 -78 52 Z" fill="#26242b" /><path d="M-38 -35 L-12 -5 M-26 -46 L-5 -8 M-8 -53 L5 -12 M14 -57 L17 -18 M38 -48 L26 -18 M-60 0 L-35 15 M-30 48 L-15 22 M-15 54 L0 20 M8 52 L10 18 M27 40 L22 16 M45 23 L32 8 M58 0 L42 -10" stroke="#7d2433" strokeWidth="3.500" /></>],
  ["unamused", <Face><B d="M-68 -10 Q-55 -28 -30 -20 M68 -10 Q55 -28 30 -20 M-52 2 L-20 8 M16 2 L56 4" /><B w={10} d="M-34 9 h8 M38 9 h8" /><B w={8} d="M-21 54 Q0 34 21 54" /></Face>],
  ["flushed", <Face><Blush /><RoundEye x={-38} y={0} /><RoundEye x={38} y={0} /><B d="M-52 -42 Q-45 -52 -22 -52 M52 -42 Q45 -52 22 -52 M-16 51 H16" /></Face>],
  ["zany", <Face><B w={7} d="M-50 -5 Q-32 -16 -12 -3" /><RoundEye x={37} y={-12} /><path d="M-50 28 Q0 44 50 28 Q42 62 0 64 Q-42 62 -50 28 Z" fill={brown} /><path d="M-22 43 Q0 38 23 43 V68 Q20 88 0 87 Q-20 88 -22 68 Z" fill="#f94fa6" /><path d="M0 48 V70" stroke="#c63179" strokeWidth="4" /></Face>],
  ["seenoevil", <Monkey covered />],
  ["wink", <Face><B d="M-56 -15 Q-50 -34 -30 -39 M24 -14 Q40 -24 58 -10" /><B w={8} d="M14 8 Q28 2 44 8" /><Oval x={-26} y={3} ry={13} /><B w={7} d="M-22 40 Q0 56 22 40" /></Face>],
  ["smiley", <Face><Oval x={-24} y={-26} ry={22} /><Oval x={24} y={-26} ry={22} /><OpenMouth /></Face>],

  ["cry", <Face><Oval x={-24} y={-5} ry={14} /><Oval x={24} y={-5} ry={14} /><B d="M-54 -18 Q-46 -36 -28 -36 M54 -18 Q46 -36 28 -36" /><path d="M-35 14 C-48 30 -48 50 -35 50 C-22 50 -22 30 -35 14Z" fill="url(#tear)" /></Face>],
  ["squint", <Face><B w={7} d="M-45 -31 L-12 -13 L-42 4 M45 -31 L12 -13 L42 4 M-52 27 Q0 32 52 27" /></Face>],
  ["scream", <Face fill="url(#fear)"><ellipse cx="-37" cy="-16" rx="23" ry="27" fill="#fff" /><ellipse cx="35" cy="-16" rx="23" ry="27" fill="#fff" /><ellipse cy="36" rx="17" ry="29" fill="#7a3506" /><path d="M-75 38 Q-65 12 -47 25 L-42 40 M75 38 Q65 12 47 25 L42 40" fill="#efad27" stroke="#a96709" strokeWidth="4" /></Face>],
  ["angry", <Face fill="url(#anger)"><path d="M-45 -14 L-10 2 M45 -14 L10 2" stroke="#5e1609" strokeWidth="7" /><ellipse cx="-22" cy="11" rx="9" ry="14" fill="#5e1609" /><ellipse cx="26" cy="11" rx="9" ry="14" fill="#5e1609" /></Face>],
  ["smirk", <Face><B d="M-66 -7 Q-58 -29 -34 -26 M66 -7 Q58 -29 34 -26 M-54 3 L-20 7 M20 3 L54 5" /><B w={10} d="M-36 10 h10 M30 10 h10" /></Face>],
  ["sad", <Face><B w={7} d="M-54 10 Q-35 11 -22 1 M54 10 Q35 11 22 1 M-25 52 Q0 30 25 52" /></Face>],
  ["sweat", <Face><ArchEyes /><OpenMouth grin /><path d="M57 -74 C51 -48 38 -40 39 -25 C42 -2 73 -2 77 -25 C76 -40 60 -54 57 -74 Z" fill="url(#tear)" /></Face>],
  ["kissclosed", <Face><Blush /><B d="M-54 -29 Q-38 -42 -21 -31 M54 -29 Q38 -42 21 -31" /><B w={8} d="M-42 2 Q-28 -8 -14 2 M42 2 Q28 -8 14 2" /><B d="M0 22 Q22 22 17 32 L4 39 Q22 42 16 52" /></Face>],
  ["monkey", <Monkey />],
];

function Paints() {
  return (
    <svg width="0" height="0" style={{ position: "absolute" }}>
      <defs>
        <radialGradient id="face" cx=".5" cy=".32" r=".7"><stop offset="0" stopColor="#ffe94a" /><stop offset=".5" stopColor="#ffd433" /><stop offset=".82" stopColor="#fdb01e" /><stop offset="1" stopColor="#e98a0b" /></radialGradient>
        <linearGradient id="shine" x2="0" y2="1"><stop offset="0" stopColor="#fffbd0" stopOpacity=".75" /><stop offset="1" stopColor="#fff6a0" stopOpacity="0" /></linearGradient>
        <radialGradient id="blush"><stop offset="0" stopColor="#f8641c" stopOpacity=".6" /><stop offset="1" stopColor="#f8741c" stopOpacity="0" /></radialGradient>
        <linearGradient id="red" x2="0" y2="1"><stop offset="0" stopColor="#fa5550" /><stop offset=".5" stopColor="#ee2a2e" /><stop offset="1" stopColor="#dc1620" /></linearGradient>
        <linearGradient id="tear" x2="0" y2="1"><stop offset="0" stopColor="#8edcf8" /><stop offset="1" stopColor="#1f8fe6" /></linearGradient>
        <linearGradient id="stream" x2="0" y2="1"><stop offset="0" stopColor="#58b2ef" /><stop offset="1" stopColor="#2b83dc" /></linearGradient>
        <linearGradient id="hand" x2="0" y2="1"><stop offset="0" stopColor="#ffdb53" /><stop offset=".6" stopColor="#fdc538" /><stop offset="1" stopColor="#f0a21c" /></linearGradient>
        <linearGradient id="fur" x2="0" y2="1"><stop offset="0" stopColor="#b59674" /><stop offset="1" stopColor="#7e5d42" /></linearGradient>
        <linearGradient id="fear" x2="0" y2="1"><stop offset="0" stopColor="#3565c7" /><stop offset=".28" stopColor="#8aa3d8" /><stop offset=".52" stopColor="#dcb64c" /><stop offset="1" stopColor="#f4a51c" /></linearGradient>
        <radialGradient id="anger" cx=".5" cy=".35" r=".75"><stop offset="0" stopColor="#ff8f38" /><stop offset=".6" stopColor="#f4692c" /><stop offset="1" stopColor="#d23a1b" /></radialGradient>
      </defs>
    </svg>
  );
}

function LockGlyph({ bg }) {
  return (
    <Lock $bg={bg}>
      <Glyph box={[243, 404, 38, 42]}>
        <rect x="244" y="419" width="35" height="25" rx="5" fill="#fff" />
        <path d="M252 420 V413 a9 9 0 0 1 18 0 V420" stroke="#fff" strokeWidth="5" />
      </Glyph>
    </Lock>
  );
}

/* ---------- bottom ---------- */

const TabBar = styled.div`
  height: 74px;
  flex: none;
  display: flex;
  align-items: center;
  background: #1f2732;
  padding: 2px 22px 0 202px;
`;

const Tab = styled.div`
  width: ${(p) => p.$w}px;
  height: 50px;
  margin-left: ${(p) => p.$ml || 0}px;
  border-radius: 25px;
  background: ${(p) => (p.$on ? "#22313f" : "none")};
  color: ${(p) => (p.$on ? "#67afea" : "#687483")};
  font: 500 24.7px/52px ${roboto};
  text-align: center;
`;

const NavBar = styled.nav`
  height: 86px;
  flex: none;
  display: flex;
  align-items: center;
  background: #171e27;
  padding: 0 152px 5px 152px;
  justify-content: space-between;
`;

const grey = "#737f8d";

export default function App() {
  return (
    <Screen>
      <GlobalStyle />
      <Paints />
      <Header>
        <StatusBar>
          <StatusText $w={62} $ls={-0.7}>11:17</StatusText>
          <Glyph box={[339, 52, 66, 66]} ml={12}>
            <path fillRule="evenodd" fill="#eff2f5" d="M350 53 H393 Q404 53 404 64 V106 Q404 117 393 117 H350 Q339 117 339 106 V64 Q339 53 350 53 Z M345 102 Q345 111 353 111 H391 Q399 111 399 103 V97 L386 82 L372 97 L362 89 Z" />
            <circle cx="360" cy="73" r="7" fill="#252d3a" />
          </Glyph>
          <Glyph box={[431, 47, 75, 78]} ml={9}>
            <path d="M434 121 L439 101 A33 33 0 1 1 451 115 Z" stroke="#eff2f5" strokeWidth="6" />
            <path d="M452 69 Q458 63 463 69 L466 78 Q465 83 462 85 Q467 93 476 96 L481 91 L491 96 Q492 103 483 106 C468 108 448 90 452 69 Z" fill="#eff2f5" />
          </Glyph>
          <Glyph box={[542, 51, 46, 69]} ml={12}>
            <path d="M553 57 H556 V51 H575 V57 H578 Q588 57 588 67 V109 Q588 119 578 119 H552 Q542 119 542 109 V67 Q542 57 553 57 Z" fill="#eff2f5" />
            <path d="M565 70 V91" stroke="#252d3a" strokeWidth="7" /><circle cx="565" cy="103" r="4.5" fill="#252d3a" />
          </Glyph>
          <Glyph box={[649, 74, 22, 22]} ml={20}><circle cx="660" cy="85" r="10.5" fill="#eff2f5" /></Glyph>
          <Spacer />
          <Glyph box={[243, 51, 45, 67]}>
            <path d="M252 58 H256 V51 H275 V58 H279 Q288 58 288 67 V108 Q288 117 279 117 H252 Q243 117 243 108 V67 Q243 58 252 58 Z" fill="#eff2f5" />
            <path d="M280 75 Q282 100 263 102 Q250 102 251 90 Q258 79 280 75 Z M247 107 Q256 92 268 89" fill="#252d3a" stroke="#eff2f5" strokeWidth="3" />
          </Glyph>
          <Glyph box={[323, 54, 59, 62]} ml={11.7}>
            <circle cx="353" cy="87" r="26" fill="#eff2f5" />
            <path d="M325 68 Q329 58 339 57 M381 68 Q377 58 367 57 M334 106 L327 114 M371 106 L379 114" stroke="#eff2f5" strokeWidth="6" />
            <path d="M352 74 V90 H363" stroke="#252d3a" strokeWidth="5" />
          </Glyph>
          <Glyph box={[414, 54, 62, 62]} ml={10.3}>
            <path d="M415 73 H430 L459 54 V112 L434 98 H415 Z" fill="#eff2f5" />
            <path d="M421 54 L478 112" stroke="#252d3a" strokeWidth="7" /><path d="M416 58 L473 114" stroke="#eff2f5" strokeWidth="6" />
          </Glyph>
          <Glyph box={[505, 54, 82, 62]} ml={9.7}>
            <path d="M507 71 Q540 43 573 71 M516 83 Q540 65 564 83 M526 94 Q540 86 553 94" stroke="#eff2f5" strokeWidth="6" />
            <circle cx="540" cy="102" r="5" fill="#eff2f5" />
            <path d="M561 94 V114 M554 108 L561 115 L568 108 M579 111 V91 M572 97 L579 90 L586 97" stroke="#eff2f5" strokeWidth="5" />
          </Glyph>
          <Glyph box={[608, 52, 64, 66]} ml={7}>
            <text x="606" y="81" fontSize="33" fontWeight="700" fontFamily="Noto Sans" textLength="44" lengthAdjust="spacingAndGlyphs" fill="#eff2f5">Vo</text>
            <text x="608" y="117" fontSize="34" fontWeight="700" fontFamily="Noto Sans" textLength="62" lengthAdjust="spacingAndGlyphs" fill="#eff2f5">LTE</text>
            <path d="M651 59 Q658 70 651 81 M661 54 Q672 70 661 84" stroke="#eff2f5" strokeWidth="5" />
          </Glyph>
          <Glyph box={[698, 54, 57, 62]} ml={8.7}>
            <path d="M701 107 V113 M718 92 V113 M735 75 V113 M752 57 V113" stroke="#eff2f5" strokeWidth="6.5" />
          </Glyph>
          <StatusText $ml={11} $w={54.3} $ls={-0.3}>12%</StatusText>
          <Glyph box={[954, 54, 45, 63]} ml={0}>
            <path d="M961 62 H966 V54 H986 V62 H991 Q998 62 998 69 V106 H955 V69 Q955 62 961 62 Z" fill="#717780" />
            <path d="M955 107 H998 Q998 117 990 117 H963 Q955 117 955 107 Z" fill="#c4725b" />
          </Glyph>
        </StatusBar>
        <TitleBar>
          <Glyph box={[102, 261, 90, 86]}>
            <path d="M187 303 H108 M149 266 L107 303 L149 341" stroke="#fff" strokeWidth="10.5" />
          </Glyph>
          <Avatar>C</Avatar>
          <Who>
            <Name>Claudia</Name>
            <Kind>bot</Kind>
          </Who>
          <Glyph box={[970, 260, 24, 90]}>
            <circle cx="982" cy="272" r="11.5" fill="#fff" /><circle cx="982" cy="305" r="11.5" fill="#fff" /><circle cx="982" cy="338" r="11.5" fill="#fff" />
          </Glyph>
        </TitleBar>
      </Header>

      <Chat>
        <Doodles />
        <Thread>
          <DatePill>16 de abril</DatePill>
          <Message out w={248} bg="#7a45c8" tail="#7a45c8" time="11:16 PM">/start</Message>
          <Message w={428} ls={-0.53} time="11:16 PM">Hi <Mention>Claudia Hernández</Mention>!</Message>
          <Message
            out
            w={320}
            ls={-0.2}
            bg="linear-gradient(#764bcf, #7353d8)"
            tail="#7353d8"
            time="11:17 PM"
            quote={
              <Quote>
                <QuoteName>Claudia</QuoteName>
                <QuoteText>Hi Claudia Hernández!</QuoteText>
              </Quote>
            }
          >
            Hola
          </Message>
          <Message w={402} ls={-0.27} time="11:17 PM">¡Hola! ¿Cómo estás?</Message>
          <Message out w={231} ls={-0.4} bg="#6f5ee2" tail="#6f5ee2" time="11:17 PM">Bien</Message>
          <Message w={438} ls={-0.68} time="11:17 PM">No entendí tu mensaje.</Message>
          <Message out w={327} ls={-0.65} bg="#6968ef" tail="#6968ef" time="11:17 PM">Buenos días</Message>
          <Message w={317} ls={-0.4} time="11:17 PM">¡Buenos días!</Message>
        </Thread>
      </Chat>

      <Composer>
        <Glyph box={[80, 102, 131, 102]} mt={3}>
          <rect x="84" y="105" width="123" height="96" rx="14" stroke={grey} strokeWidth="7" />
          {[112, 129, 146, 163, 180].map((x) => (
            <path key={x} d={`M${x - 5} 136 h10 M${x - 5} 154 h10`} stroke={grey} strokeWidth="10" strokeLinecap="butt" />
          ))}
          <path d="M124 176 H167" stroke={grey} strokeWidth="9" strokeLinecap="butt" />
        </Glyph>
        <Placeholder $ml={20} $size={30} $mt={1}>Mensaje</Placeholder>
        <Glyph box={[671, 92, 107, 124]} mt={3}>
          <path d="M677 138 L708 108 C726 91 750 94 764 107 C779 123 777 145 761 160 L723 199 C711 212 692 214 681 202 C670 191 671 172 684 159 L717 127 C727 118 740 120 746 128 C752 136 751 146 743 153 L711 181" stroke={grey} strokeWidth="7.5" />
        </Glyph>
        <Glyph box={[933, 86, 97, 133]} ml={52} mt={2}>
          <rect x="957" y="90" width="49" height="85" rx="24.5" stroke={grey} strokeWidth="7.5" />
          <path d="M936 153 C938 181 955 197 981 198 C1007 197 1024 181 1026 153 M981 199 V215" stroke={grey} strokeWidth="8" />
        </Glyph>
      </Composer>

      <Categories>
        <RecentTab>
          <Glyph box={[89, 329, 101, 102]}>
            <circle cx="139.500" cy="380" r="47" stroke="#67afea" strokeWidth="7" />
            <path d="M139 353 V382 H165" stroke="#67afea" strokeWidth="7" />
          </Glyph>
        </RecentTab>
        <CategoryPill>
          <CategoryIcon>
            <Glyph box={[268, 329, 102, 102]}>
              <circle cx="319" cy="380" r="47" stroke={grey} strokeWidth="6.5" />
              <ellipse cx="303" cy="372" rx="6" ry="7" fill={grey} /><ellipse cx="335" cy="372" rx="6" ry="7" fill={grey} />
              <path d="M299 393 Q318 412 339 393" stroke={grey} strokeWidth="6.5" />
            </Glyph>
          </CategoryIcon>
          <CategoryIcon>
            <Glyph box={[432, 331, 121, 100]}>
              <path d="M452 378 C448 358 449 345 454 337 Q459 334 476 348 Q493 343 512 348 Q530 334 535 338 C540 350 540 362 535 378 Q546 410 520 423 Q493 434 466 423 Q440 410 452 378 M436 398 H458 M441 413 L460 406 M549 398 H527 M545 413 L526 406" stroke={grey} strokeWidth="6" />
              <circle cx="475" cy="384" r="6" fill={grey} /><circle cx="512" cy="384" r="6" fill={grey} /><path d="M490 397 h8 l-4 4 Z" stroke={grey} strokeWidth="5" />
            </Glyph>
          </CategoryIcon>
          <CategoryIcon>
            <Glyph box={[618, 329, 98, 102]}>
              <path d="M668 360 C650 350 624 352 624 382 C625 407 642 427 654 427 C660 427 663 423 668 423 C674 423 677 427 683 427 C697 427 711 405 711 380 C711 354 686 350 668 360 V335 M676 350 C675 336 686 332 698 333 C699 345 692 353 676 350 Z" stroke={grey} strokeWidth="6.5" />
            </Glyph>
          </CategoryIcon>
          <CategoryIcon>
            <Glyph box={[791, 329, 101, 102]}>
              <circle cx="841.500" cy="380" r="47" stroke={grey} strokeWidth="6.5" />
              <path d="M808 348 Q836 379 808 413 M875 348 Q847 379 875 413" stroke={grey} strokeWidth="6.5" />
            </Glyph>
          </CategoryIcon>
          <CategoryIcon>
            <Glyph box={[960, 334, 112, 95]}>
              <path d="M976 372 L985 346 Q988 339 995 339 H1037 Q1044 339 1047 346 L1057 372 M963 368 H972 M1069 368 H1060 M976 372 H1057 Q1068 375 1068 388 V419 Q1067 425 1061 425 Q1054 425 1054 418 Q1052 412 1046 412 H987 Q980 412 978 418 Q978 425 971 425 Q964 425 964 419 V388 Q964 376 976 372 Z" stroke={grey} strokeWidth="6.5" />
              <circle cx="986" cy="393" r="7" fill={grey} /><circle cx="1046" cy="393" r="7" fill={grey} />
            </Glyph>
          </CategoryIcon>
          <CategoryIcon>
            <Glyph box={[47, 329, 76, 102]}>
              <path d="M67 403 C67 392 51 385 51 364 C51 346 65 333 85 333 C105 333 119 346 119 364 C119 385 103 392 103 403 Z M69 405 V414 Q69 427 79 427 H91 Q101 427 101 414 V405 M85 382 V400 M74 371 L85 380 L96 371" stroke={grey} strokeWidth="6" />
            </Glyph>
          </CategoryIcon>
        </CategoryPill>
        <Packs>
          <Pack>
            <Glyph box={[160, 328, 106, 106]}>
              <circle cx="212" cy="380" r="50" fill="url(#face)" /><ellipse cx="212" cy="350" rx="30" ry="14" fill="url(#shine)" />
              <circle cx="185" cy="383" r="10" fill="#1b1713" /><circle cx="187" cy="379" r="3" fill="#fff" />
              <path d="M234 385 q8 -7 16 2" stroke="#49350a" strokeWidth="5" />
              <path d="M190 402 Q214 382 240 402 Q214 421 190 402 Z" fill="#e5471d" /><path d="M192 402 Q214 406 238 402" stroke="#8e230b" strokeWidth="3" />
            </Glyph>
            <LockGlyph bg="#6d6338" />
          </Pack>
          <Pack>
            <Glyph box={[338, 322, 110, 116]}>
              <circle cx="392" cy="380" r="52" fill="#f4b724" />
              <path d="M342 365 L378 326 M344 378 L398 324 M392 350 L415 328 M415 350 L430 338 M420 365 L440 350 M425 380 L446 365 M345 390 L352 384 M352 412 L360 402 M364 424 L372 414 M380 432 L388 424" stroke="#3b2911" strokeWidth="4" />
              <circle cx="365" cy="381" r="9" fill="#43200d" /><circle cx="415" cy="381" r="9" fill="#43200d" />
              <path d="M354 362 Q362 356 376 354 M405 352 Q418 354 426 362" stroke="#5a290d" strokeWidth="5" />
              <path d="M356 400 Q390 404 430 395 Q426 423 398 424 Q364 422 356 400 Z" fill="#d81c3d" />
            </Glyph>
            <LockGlyph bg="#6d737c" />
          </Pack>
          <Pack>
            <Glyph box={[507, 326, 126, 118]} ml={1}>
              <path d="M509 365 L555 350 L628 360 L632 378 L618 392 L612 436 L520 439 L514 400 Z" fill="#f2f8fd" />
              <path d="M512 366 Q540 342 570 355 Q600 345 630 366" stroke="#7cc7ef" strokeWidth="5" />
              <path d="M570 353 V345" stroke="#e2b043" strokeWidth="12" /><path d="M571 328 Q560 345 571 347 Q581 345 571 328 Z" fill="#f8a82c" />
              {[["H", 514, "#e62c3b"], ["A", 535, "#ed7b22"], ["P", 557, "#2fa64b"], ["P", 578, "#2879df"], ["Y", 599, "#2aa3de"]].map(([c, x, f]) => (
                <text key={x} x={x} y={395} fontSize="35" fontWeight="900" fontFamily="Roboto" fill={f} stroke={f} strokeWidth="1.500">{c}</text>
              ))}
              <text x="518" y="434" fontSize="36" fontWeight="900" fontFamily="Roboto" fill="#3650dd" stroke="#3650dd" strokeWidth="2">B-</text>
              <text x="557" y="434" fontSize="36" fontWeight="900" fontFamily="Roboto" fill="#e8454c">da</text>
              <path d="M520 439 L514 400 M520 439 H600" stroke="#4351dc" strokeWidth="4" />
            </Glyph>
            <LockGlyph bg="#6d737c" />
          </Pack>
          <Pack>
            <Glyph box={[691, 319, 116, 118]} mt={-1}>
              <circle cx="748" cy="378" r="57" fill="url(#face)" /><ellipse cx="748" cy="342" rx="34" ry="16" fill="url(#shine)" />
              <ellipse cx="733" cy="366" rx="5" ry="9" fill={brown} /><ellipse cx="766" cy="366" rx="5" ry="9" fill={brown} />
              {[730, 743, 756, 768].map((x) => <path key={x} d={`M${x} 388 q10 15 0 30`} stroke="#a66c0b" strokeWidth="3" />)}
            </Glyph>
            <LockGlyph bg="#6d737c" />
          </Pack>
          <Pack>
            <Glyph box={[879, 338, 100, 83]}>
              <circle cx="890" cy="358" r="10" fill="#fff" /><circle cx="890" cy="402" r="10" fill="#fff" />
              <path d="M917 343 H938 Q973 344 973 380 Q973 415 938 416 H917 Z" stroke="#fff" strokeWidth="9" strokeLinejoin="miter" />
            </Glyph>
            <LockGlyph bg="#345c80" />
          </Pack>
          <Pack>
            <Glyph box={[1047, 333, 116, 96]} ml={1}>
              <path d="M1065 340 Q1095 328 1150 340 L1155 410 Q1100 432 1065 426 L1060 400 L1048 385 L1048 365 L1058 362 Z" fill="#eba88a" stroke="#8a4838" strokeWidth="3" />
              <path d="M1070 355 q12 -8 22 0 M1072 366 q10 5 20 0 M1098 348 L1103 370 L1098 376" stroke="#66342b" strokeWidth="4" />
              <path d="M1064 382 Q1090 395 1130 385 L1125 408 Q1085 414 1064 382 Z" fill="#fff" stroke="#432a26" strokeWidth="4" /><path d="M1068 394 Q1090 402 1130 398 M1080 388 V404 M1093 390 V407" stroke="#432a26" strokeWidth="3" />
            </Glyph>
          </Pack>
        </Packs>
      </Categories>

      <Search>
        <Glyph box={[113, 568, 80, 81]}>
          <circle cx="145" cy="600" r="29" stroke={grey} strokeWidth="7" /><path d="M167 622 L189 645" stroke={grey} strokeWidth="9" />
        </Glyph>
        <Placeholder $ml={22} $size={28} $ls={-0.4} $mt={-2}>Buscar</Placeholder>
      </Search>

      <EmojiGrid>
        {emojis.map(([id, art]) => (
          <EmojiCell key={id}>
            <Glyph box={[-90, -90, 180, 180]}>{art}</Glyph>
          </EmojiCell>
        ))}
      </EmojiGrid>

      <TabBar>
        <Tab $on $w={118}>Emojis</Tab>
        <Tab $w={40} $ml={32}>GIF</Tab>
        <Tab $w={92} $ml={42}>Stickers</Tab>
        <Spacer />
        <Svg width="41" height="32" viewBox="0 0 41 32" stroke={grey} strokeWidth="2.3">
          <path d="M13 1.500 H34 Q39.500 1.500 39.500 7 V25 Q39.500 30.500 34 30.500 H13 Q10.500 30.500 9 28 L2.500 18.500 Q1 16 2.500 13.500 L9 4 Q10.500 1.500 13 1.500 Z M17 10 L28.500 22 M28.500 10 L17 22" />
        </Svg>
      </TabBar>

      <NavBar>
        <Svg width="17" height="28" viewBox="0 0 17 28" stroke="#b9bdc2" strokeWidth="2.200"><path d="M15.500 1 L1.500 14 L15.500 27" /></Svg>
        <Svg width="28" height="28" viewBox="0 0 28 28" stroke="#b9bdc2" strokeWidth="2.200" $ml={2.5}><rect x="1.200" y="1.200" width="25.600" height="25.600" rx="8" /></Svg>
        <Svg width="25" height="28" viewBox="0 0 25 28" stroke="#b9bdc2" strokeWidth="2.200"><path d="M1.200 1 V27 M12.500 1 V27 M23.800 1 V27" /></Svg>
      </NavBar>
    </Screen>
  );
}
